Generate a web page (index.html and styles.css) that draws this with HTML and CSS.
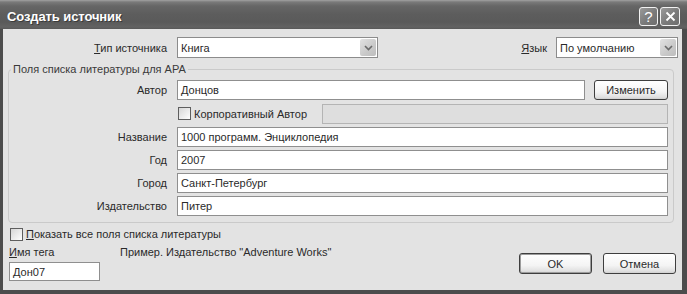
FILE: index.html
```html
<!DOCTYPE html>
<html lang="ru">
<head>
<meta charset="utf-8">
<title>Создать источник</title>
<link rel="stylesheet" href="styles.css">
</head>
<body>
<div class="window">
  <div class="titlebar">
    <span class="title">Создать источник</span>
    <div class="tb-buttons">
      <span class="tb-btn help">?</span>
      <span class="tb-btn close"><svg width="11" height="11" viewBox="0 0 11 11"><path d="M1.5 1.5 L9.5 9.5 M9.5 1.5 L1.5 9.5" stroke="#fff" stroke-width="1.8" fill="none"/></svg></span>
    </div>
  </div>
  <div class="client">
    <div class="top-row">
      <span class="lbl-type"><u>Т</u>ип источника</span>
      <div class="select sel-type">
        <span class="sel-text">Книга</span>
        <span class="sel-arrow"><svg width="9" height="6" viewBox="0 0 9 6"><path d="M1 1 L4.5 4.5 L8 1" stroke="#6a6a6a" stroke-width="1.6" fill="none"/></svg></span>
      </div>
      <span class="lbl-lang"><u>Я</u>зык</span>
      <div class="select sel-lang">
        <span class="sel-text">По умолчанию</span>
        <span class="sel-arrow"><svg width="9" height="6" viewBox="0 0 9 6"><path d="M1 1 L4.5 4.5 L8 1" stroke="#6a6a6a" stroke-width="1.6" fill="none"/></svg></span>
      </div>
    </div>

    <fieldset class="group">
      <legend>Поля списка литературы для APA</legend>
      <div class="grid">
        <span class="lbl">Автор</span>
        <div class="author-cell">
          <div class="field grow">Донцов</div>
          <button class="btn btn-edit">Изменить</button>
        </div>

        <span></span>
        <div class="corp-cell">
          <span class="check"></span>
          <span class="check-text">Корпоративный Автор</span>
          <div class="field disabled"></div>
        </div>

        <span class="lbl">Название</span>
        <div class="field">1000 программ. Энциклопедия</div>

        <span class="lbl">Год</span>
        <div class="field">2007</div>

        <span class="lbl">Город</span>
        <div class="field">Санкт-Петербург</div>

        <span class="lbl">Издательство</span>
        <div class="field">Питер</div>
      </div>
    </fieldset>

    <div class="show-all">
      <span class="check"></span>
      <span class="check-text"><u>П</u>оказать все поля списка литературы</span>
    </div>

    <div class="bottom">
      <div class="tag-col">
        <span class="tag-lbl"><u>И</u>мя тега</span>
        <div class="field tag-field">Дон07</div>
      </div>
      <span class="example">Пример. Издательство "Adventure Works"</span>
      <div class="buttons">
        <button class="btn btn-ok">OK</button>
        <button class="btn btn-cancel">Отмена</button>
      </div>
    </div>
  </div>
</div>
</body>
</html>
```

FILE: styles.css
```css
html, body {
  margin: 0;
  padding: 0;
  background: #e3e3e3;
}

body {
  font-family: "Liberation Sans", Arial, sans-serif;
  font-size: 11px;
  color: #2a2a2a;
}

u {
  text-decoration: underline;
  text-underline-offset: 1px;
}

.window {
  width: 687px;
  height: 294px;
  display: flex;
  flex-direction: column;
  box-sizing: border-box;
}

/* ---------- title bar ---------- */
.titlebar {
  height: 29px;
  flex: none;
  box-sizing: border-box;
  padding: 3px 7px 0 7px;
  display: flex;
  align-items: center;
  background: linear-gradient(#a2a2a2 0, #7a7a7a 2px, #666 6px, #5d5d5d 14px, #5a5a5a 22px, #626262 27px, #585858 29px);
}

.title {
  color: #fff;
  font-weight: bold;
  font-size: 13px;
  letter-spacing: -0.1px;
  text-shadow: 1px 1px 0 #3a3a3a;
}

.tb-buttons {
  margin-left: auto;
  display: flex;
  gap: 2px;
}

.tb-btn {
  width: 19px;
  height: 19px;
  box-sizing: border-box;
  border: 1px solid #f2f2f2;
  border-radius: 3px;
  background: linear-gradient(135deg, #9a9a9a, #7a7a7a 55%, #6e6e6e);
  display: flex;
  align-items: center;
  justify-content: center;
  color: #fff;
}

.help {
  font-size: 15px;
  line-height: 1;
}

.close {
  width: 20px;
}

/* ---------- client area ---------- */
.client {
  flex: 1;
  display: flex;
  flex-direction: column;
  background: #e3e3e3;
  border-style: solid;
  border-color: #4c4c4c;
  border-width: 0 5px 4px 3px;
  padding: 0 4px 0 5px;
}

.top-row {
  margin-top: 8px;
  height: 21px;
  display: flex;
  align-items: center;
}

.lbl-type {
  width: 159px;
  text-align: right;
  margin-right: 10px;
}

.lbl-lang {
  margin-left: auto;
  margin-right: 9px;
}

.select {
  height: 21px;
  box-sizing: border-box;
  border: 1px solid #8c8c8c;
  background: #fff;
  display: flex;
  align-items: center;
}

.sel-type { width: 201px; }
.sel-lang { width: 122px; }

.sel-text {
  padding-left: 3px;
}

.sel-arrow {
  margin-left: auto;
  margin-right: 1px;
  width: 16px;
  height: 17px;
  border-radius: 2px;
  background: linear-gradient(135deg, #e2e2e2, #c9c9c9 60%, #bdbdbd);
  display: flex;
  align-items: center;
  justify-content: center;
}

/* ---------- group box ---------- */
.group {
  margin: 4px 4px 0 0;
  padding: 4px 5px 6px 0;
  border: 1px solid #cacaca;
  border-radius: 4px;
  min-width: 0;
}

.group legend {
  margin-left: 2px;
  padding: 0 2px;
  line-height: 14px;
  color: #3a3a3a;
}

.grid {
  display: grid;
  grid-template-columns: 158px 1fr;
  grid-template-rows: 20px 21px 20px 20px 20px 20px;
  column-gap: 10px;
  row-gap: 3px;
}

.lbl {
  align-self: center;
  text-align: right;
}

.field {
  box-sizing: border-box;
  height: 100%;
  border: 1px solid #8f8f8f;
  background: #fff;
  padding-left: 3px;
  display: flex;
  align-items: center;
}

.author-cell {
  display: flex;
  gap: 9px;
}

.grow {
  flex: 1;
}

.corp-cell {
  display: flex;
  align-items: center;
}

.corp-cell .check {
  margin-left: 1px;
}

.field.disabled {
  margin-left: auto;
  width: 346px;
  height: 20px;
  background: #dedede;
  border-color: #b4b4b4;
}

.check {
  width: 13px;
  height: 13px;
  flex: none;
  box-sizing: border-box;
  border: 1px solid #5e5e5e;
  background: linear-gradient(135deg, #d6d6d6, #f2f2f2 70%, #fff);
}

.check-text {
  margin-left: 3px;
}

/* ---------- bottom ---------- */
.show-all {
  margin-top: 4px;
  height: 14px;
  display: flex;
  align-items: center;
  padding-left: 2px;
}

.bottom {
  display: flex;
  align-items: flex-start;
  margin-top: 4px;
}

.tag-col {
  display: flex;
  flex-direction: column;
  margin-left: 1px;
}

.tag-lbl {
  line-height: 14px;
}

.tag-field {
  margin-top: 3px;
  width: 91px;
  height: 19px;
}

.example {
  margin-left: 20px;
  line-height: 14px;
}

.buttons {
  margin-left: auto;
  margin-right: 2px;
  margin-top: 8px;
  display: flex;
  gap: 11px;
}

.btn {
  font-family: "Liberation Sans", Arial, sans-serif;
  font-size: 11px;
  color: #2a2a2a;
  height: 21px;
  width: 73px;
  box-sizing: border-box;
  padding: 0;
  border: 1px solid #3e3e3e;
  border-radius: 3px;
  background: linear-gradient(#ffffff, #f4f4f4 60%, #e0e0e0 90%, #cfcfcf);
}

.btn-edit {
  width: 74px;
  height: 20px;
}

.btn-ok {
  box-shadow: inset 0 0 0 1px #9c9c9c;
}
```
